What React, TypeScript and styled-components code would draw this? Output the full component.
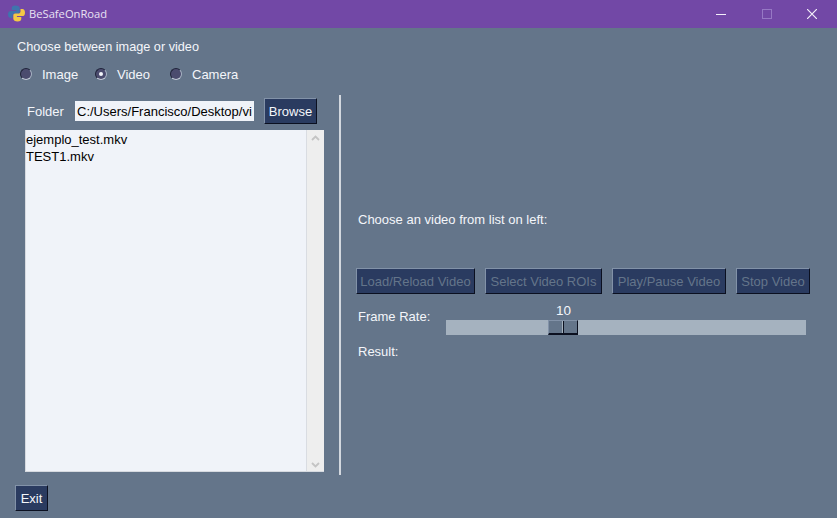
import { createGlobalStyle, styled } from "styled-components";

const GlobalStyle = createGlobalStyle`
  html, body {
    margin: 0;
    padding: 0;
    background: #64758a;
  }
  * {
    box-sizing: border-box;
  }
`;

const Window = styled.div`
  width: 837px;
  height: 518px;
  display: flex;
  flex-direction: column;
  overflow: hidden;
  background: #64758a;
  color: #f4f6fa;
  font-family: "Liberation Sans", Arial, sans-serif;
  font-size: 13px;
`;

const TitleBar = styled.div`
  height: 28px;
  flex: none;
  display: flex;
  align-items: center;
  padding: 0 2px 1px 8px;
  background: #7248a6;
`;

const AppName = styled.div`
  flex: 1;
  margin-left: 4px;
  font-family: "Open Sans", sans-serif;
  font-size: 11.2px;
  color: #e9e2f3;
`;

const WinButton = styled.div`
  width: 45.5px;
  height: 27px;
  display: flex;
  align-items: center;
  justify-content: center;
`;

const Intro = styled.div`
  height: 14px;
  margin: 12px 0 0 17px;
  font-size: 12.7px;
  line-height: 14px;
`;

const RadioRow = styled.div`
  display: flex;
  height: 16px;
  margin: 12px 0 0 20px;
`;

const RadioItem = styled.label`
  width: 75px;
  display: flex;
  align-items: center;
  gap: 10px;
`;

const RadioDot = styled.span<{ $checked?: boolean }>`
  width: 12px;
  height: 12px;
  border-radius: 50%;
  flex: none;
  display: flex;
  align-items: center;
  justify-content: center;
  background: #4b4b6e;
  border: 1px solid;
  border-color: #20243a #a9b4c4 #c3cad6 #20243a;

  &::after {
    content: "";
    width: 4px;
    height: 4px;
    border-radius: 50%;
    background: ${(p) => (p.$checked ? "#f4f6fa" : "transparent")};
  }
`;

const Main = styled.div`
  display: flex;
  height: 380px;
  margin-top: 13px;
`;

const LeftPanel = styled.div`
  width: 339px;
  flex: none;
  padding: 3px 0 0 25px;
`;

const FolderRow = styled.div`
  display: flex;
  align-items: center;
  height: 26px;
  padding-left: 2px;
`;

const FolderLabel = styled.span`
  width: 48px;
`;

const PathInput = styled.input`
  width: 179px;
  height: 20px;
  padding: 0 2px;
  border: 0;
  outline: 0;
  background: #f0f3f9;
  color: #000;
  font: 13px "Liberation Sans", Arial, sans-serif;
`;

const PushButton = styled.button<{ $width: number }>`
  width: ${(p) => p.$width}px;
  height: 26px;
  padding: 0;
  flex: none;
  white-space: nowrap;
  background: #2a3b60;
  color: #f4f6fa;
  font: 13px "Liberation Sans", Arial, sans-serif;
  border: 1px solid;
  border-color: #8292a8 #0b1020 #0b1020 #8292a8;

  &:disabled {
    color: #64758a;
  }
`;

const BrowseButton = styled(PushButton)`
  margin-left: 10px;
`;

const FileList = styled.div`
  display: flex;
  width: 299px;
  height: 342px;
  margin-top: 6px;
  background: #f0f3f9;
  border-left: 1px solid #d6dae0;
  border-bottom: 1px solid #d6dae0;
`;

const FileItems = styled.div`
  flex: 1;
  border-right: 1px solid #d9dce2;
  color: #000;
  line-height: 17px;
  padding-top: 1px;
`;

const ScrollTrack = styled.div`
  width: 17px;
  flex: none;
  display: flex;
  flex-direction: column;
  justify-content: space-between;
  align-items: center;
  padding: 5px 0 3px;
  background: #eeeeee;
`;

const Divider = styled.div`
  width: 2px;
  flex: none;
  background: #d3d8df;
`;

const RightPanel = styled.div`
  flex: 1;
  display: flex;
  flex-direction: column;
  padding: 116px 0 0 15px;
`;

const Hint = styled.div`
  height: 16px;
  margin: 1px 0 0 2px;
  line-height: 16px;
`;

const ButtonRow = styled.div`
  display: flex;
  gap: 10px;
  margin-top: 40px;
`;

const SliderRow = styled.div`
  display: flex;
  align-items: flex-end;
  height: 34px;
  margin: 7px 0 0 2px;
`;

const SliderLabel = styled.span`
  width: 88px;
  align-self: flex-start;
  margin-top: 8px;
  line-height: 16px;
`;

const Slider = styled.div`
  position: relative;
  width: 360px;
  height: 15px;
  background: #a5b2bf;
`;

const SliderValue = styled.span`
  position: absolute;
  left: 110px;
  top: -17px;
  width: 14px;
  font-size: 13.5px;
  line-height: 15px;
  text-align: center;
`;

const SliderThumb = styled.div`
  position: absolute;
  left: 102px;
  top: 0;
  width: 30px;
  height: 15px;
  background: linear-gradient(to right, #64758a 0 13px, #a5b2bf 13px 14px, #0b1020 14px 15px, #64758a 15px);
  border-top: 1px solid #8292a8;
  border-left: 1px solid #8292a8;
  border-right: 1px solid #0b1020;
  border-bottom: 2px solid #0b1020;
`;

const ResultLabel = styled.div`
  height: 16px;
  margin: 9px 0 0 2px;
  line-height: 16px;
`;

const Footer = styled.div`
  padding: 10px 0 0 15px;
`;

const Chevron = ({ up }: { up?: boolean }) => (
  <svg width="9" height="6" viewBox="0 0 9 6">
    <path d={up ? "M1 5 L4.5 1.5 L8 5" : "M1 1 L4.5 4.5 L8 1"} fill="none" stroke="#c4c4c4" strokeWidth="1.8" />
  </svg>
);

const PythonLogo = () => (
  <svg width="17" height="17" viewBox="0 0 16 16">
    <path d="M7 0.5 C4.4 0.5 3.5 1.6 3.5 3 V4.6 H7.6 V5.6 H2.4 C0.9 5.6 0 6.9 0 8.8 C0 10.9 1 12.2 2.4 12.2 H4.2 V10.2 C4.2 8.9 5.2 8 6.5 8 H9.3 C10.4 8 11 7.2 11 6.2 V3 C11 1.6 9.4 0.5 7 0.5 Z" fill="#3f74ad" />
    <path d="M9 15.5 C11.6 15.5 12.5 14.4 12.5 13 V11.4 H8.4 V10.4 H13.6 C15.1 10.4 16 9.1 16 7.2 C16 5.1 15 3.8 13.6 3.8 H11.8 V5.8 C11.8 7.1 10.8 8 9.5 8 H6.7 C5.6 8 5 8.8 5 9.8 V13 C5 14.4 6.6 15.5 9 15.5 Z" fill="#f4c945" />
  </svg>
);

export default function App() {
  return (
    <Window>
      <GlobalStyle />
      <TitleBar>
        <PythonLogo />
        <AppName>BeSafeOnRoad</AppName>
        <WinButton>
          <svg width="10" height="10" viewBox="0 0 10 10">
            <path d="M0 5.5 H10" stroke="#f4f0fa" strokeWidth="1" />
          </svg>
        </WinButton>
        <WinButton>
          <svg width="10" height="10" viewBox="0 0 10 10">
            <rect x="0.5" y="0.5" width="9" height="9" fill="none" stroke="#9678c4" />
          </svg>
        </WinButton>
        <WinButton>
          <svg width="10" height="10" viewBox="0 0 10 10">
            <path d="M0 0 L10 10 M10 0 L0 10" stroke="#f4f0fa" strokeWidth="1.2" />
          </svg>
        </WinButton>
      </TitleBar>

      <Intro>Choose between image or video</Intro>
      <RadioRow>
        <RadioItem>
          <RadioDot />
          Image
        </RadioItem>
        <RadioItem>
          <RadioDot $checked />
          Video
        </RadioItem>
        <RadioItem>
          <RadioDot />
          Camera
        </RadioItem>
      </RadioRow>

      <Main>
        <LeftPanel>
          <FolderRow>
            <FolderLabel>Folder</FolderLabel>
            <PathInput readOnly value="C:/Users/Francisco/Desktop/videos" />
            <BrowseButton $width={53}>Browse</BrowseButton>
          </FolderRow>
          <FileList>
            <FileItems>
              <div>ejemplo_test.mkv</div>
              <div>TEST1.mkv</div>
            </FileItems>
            <ScrollTrack>
              <Chevron up />
              <Chevron />
            </ScrollTrack>
          </FileList>
        </LeftPanel>
        <Divider />
        <RightPanel>
          <Hint>Choose an video from list on left:</Hint>
          <ButtonRow>
            <PushButton $width={119} disabled>Load/Reload Video</PushButton>
            <PushButton $width={117} disabled>Select Video ROIs</PushButton>
            <PushButton $width={114} disabled>Play/Pause Video</PushButton>
            <PushButton $width={74} disabled>Stop Video</PushButton>
          </ButtonRow>
          <SliderRow>
            <SliderLabel>Frame Rate:</SliderLabel>
            <Slider>
              <SliderValue>10</SliderValue>
              <SliderThumb />
            </Slider>
          </SliderRow>
          <ResultLabel>Result:</ResultLabel>
        </RightPanel>
      </Main>

      <Footer>
        <PushButton $width={33}>Exit</PushButton>
      </Footer>
    </Window>
  );
}
